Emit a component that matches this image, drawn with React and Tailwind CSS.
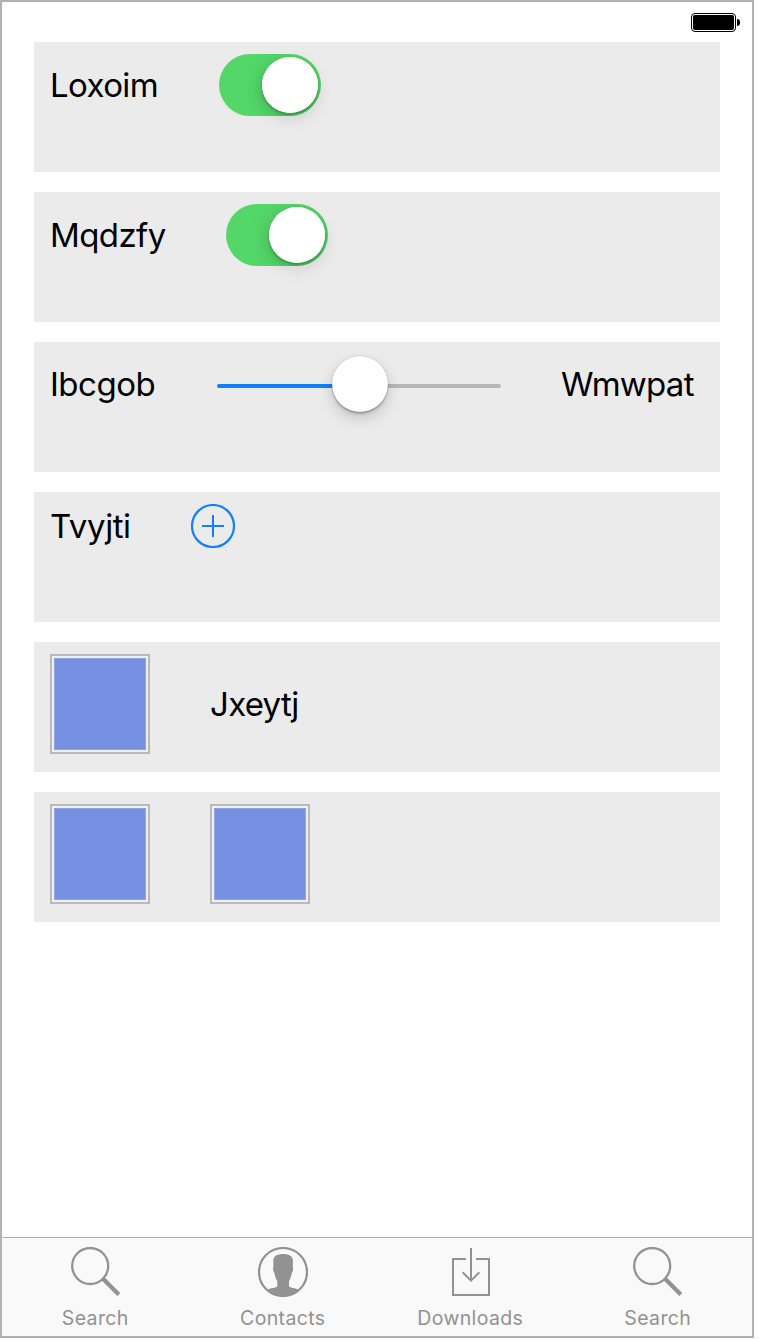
import React from "react";

function Label({ className, children }) {
  return (
    <span className={`block shrink-0 whitespace-nowrap text-[33px] leading-[40px] text-black ${className}`}>
      {children}
    </span>
  );
}

function Card({ children }) {
  return <section className="flex h-[130px] items-start gap-[60px] bg-[#ebebeb] px-4 pt-3">{children}</section>;
}

function Toggle() {
  return (
    <div className="relative h-[62px] w-[102px] shrink-0">
      <div className="flex h-full w-full items-start overflow-hidden rounded-full bg-[#53d769] pl-[43px] pt-[3px]">
        <div className="h-14 w-14 shrink-0 rounded-full bg-white shadow-[0_2px_3px_rgba(0,0,0,0.26),0_3px_26px_rgba(0,0,0,0.08)]" />
      </div>
      <div className="absolute left-[43px] top-[3px] h-14 w-14 rounded-full bg-white shadow-[0_6px_16px_rgba(0,0,0,0.12)]" />
    </div>
  );
}

function Slider() {
  return (
    <div className="relative flex h-[64px] w-[284px] shrink-0 items-center">
      <div className="h-1 w-[143px] rounded-l-full bg-[#147efb]" />
      <div className="h-1 flex-1 rounded-r-full bg-[#b7b7b7]" />
      <div className="absolute left-[115px] top-[2px] h-14 w-14 rounded-full bg-white shadow-[0_0_1px_rgba(0,0,0,0.3),0_2px_2px_rgba(0,0,0,0.24),0_6px_14px_rgba(0,0,0,0.18)]" />
    </div>
  );
}

function Tile() {
  return (
    <div className="h-[100px] w-[100px] shrink-0 border-2 border-[#bababa] bg-[#f0f1f5] p-[2px]">
      <div className="h-full w-full bg-[#7690e2] shadow-[inset_0_0_0_1px_#8da2e7]" />
    </div>
  );
}

function AddIcon() {
  return (
    <svg className="h-11 w-11 shrink-0" viewBox="0 0 44 44" fill="none" stroke="#147efb" strokeWidth="2">
      <circle cx="22" cy="22" r="21" strokeWidth="2.2" />
      <path d="M11 22H33M22 11V33" />
    </svg>
  );
}

function SearchIcon() {
  return (
    <svg className="h-[50px] w-[50px]" viewBox="0 0 50 50" fill="none" stroke="#929292">
      <circle cx="19.2" cy="19" r="18" strokeWidth="2.3" />
      <path d="M32 31.8L47.8 47.6" strokeWidth="4.2" />
    </svg>
  );
}

function ContactIcon() {
  return (
    <svg className="h-[50px] w-[50px]" viewBox="0 0 50 50">
      <circle cx="25" cy="25" r="24" fill="none" stroke="#929292" strokeWidth="2.2" />
      <path
        fill="#929292"
        d="M15.3 13.5C15.5 9 19.5 7 25 7C30.8 7 34.7 9 34.9 13.5L34.8 20C35.6 21 35.2 24 33.8 26C33 30 32.2 32.5 31 34V39C31.5 41.5 38 40.5 41 43.3A24 24 0 0 1 9 43.3C12 40.5 18.5 41.5 19.3 39V34C18 32.5 17.2 30 16.4 26C15 24 14.6 21 15.4 20Z"
      />
    </svg>
  );
}

function DownloadIcon() {
  return (
    <svg className="h-[50px] w-[50px]" viewBox="0 0 50 50" fill="none" stroke="#929292" strokeWidth="2">
      <path d="M20 12H7V48H43V12H30" />
      <path d="M25 1V33M16.6 25.2L25 33.6L33.4 25.2" />
    </svg>
  );
}

const tabs = [
  { label: "Search", Icon: SearchIcon },
  { label: "Contacts", Icon: ContactIcon },
  { label: "Downloads", Icon: DownloadIcon },
  { label: "Search", Icon: SearchIcon },
];

export default function App() {
  return (
    <div className="min-h-[1340px] bg-white font-['Inter','Liberation_Sans',sans-serif]">
      <div className="flex h-[1338px] w-[754px] flex-col border-2 border-[#b2b2b2] bg-white">
        <header className="flex h-10 shrink-0 items-start justify-end pr-3 pt-[11px]">
          <div className="h-[19px] w-[45px] rounded-[4px] border border-black p-px">
            <div className="h-full w-full rounded-[2px] bg-black" />
          </div>
          <div className="ml-px mt-[6px] h-[7px] w-[3px] rounded-r-[3px] bg-black" />
        </header>

        <main className="flex flex-1 flex-col gap-5 px-8">
          <Card>
            <Label className="mt-[11px] w-[109px] tracking-[-0.6px]">Loxoim</Label>
            <Toggle />
          </Card>
          <Card>
            <Label className="mt-[11px] w-[116px] tracking-[-0.6px]">Mqdzfy</Label>
            <Toggle />
          </Card>
          <Card>
            <Label className="mt-[10px] w-[107px] tracking-[-0.5px]">Ibcgob</Label>
            <Slider />
            <Label className="mt-[10px] tracking-[-0.75px]">Wmwpat</Label>
          </Card>
          <Card>
            <Label className="mt-[2px] w-[81px] tracking-[-0.4px]">Tvyjti</Label>
            <AddIcon />
          </Card>
          <Card>
            <Tile />
            <Label className="mt-[30px] tracking-[-0.7px]">Jxeytj</Label>
          </Card>
          <Card>
            <Tile />
            <Tile />
          </Card>
        </main>

        <nav className="grid h-[99px] shrink-0 grid-cols-4 border-t border-[#b2b2b2] bg-[#f9f9f9]">
          {tabs.map(({ label, Icon }, i) => (
            <div key={i} className="flex flex-col items-center pt-[9px]">
              <Icon />
              <span className="mt-[9px] pr-px text-[19.5px] leading-6 tracking-[0.35px] text-[#929292]">{label}</span>
            </div>
          ))}
        </nav>
      </div>
    </div>
  );
}
